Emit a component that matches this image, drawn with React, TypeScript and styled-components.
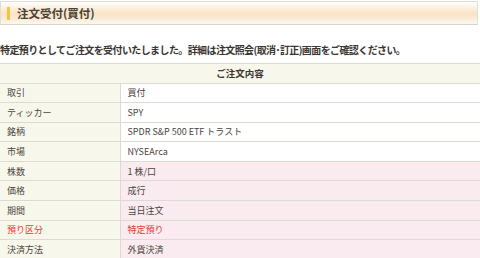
import React from 'react';
import styled, { createGlobalStyle } from 'styled-components';

// --- Global ---
const GlobalStyle = createGlobalStyle`
  html, body {
    margin: 0;
    padding: 0;
    background: #ffffff;
  }
  body {
    font-family: "Noto Sans CJK JP", "Noto Sans", sans-serif;
    color: #3b3b3b;
  }
`;

// --- Types ---
interface OrderRow {
  label: string;
  value: string;
  tone?: 'plain' | 'pink';
  alert?: boolean;
}

const rows: OrderRow[] = [
  { label: '取引', value: '買付' },
  { label: 'ティッカー', value: 'SPY' },
  { label: '銘柄', value: 'SPDR S&P 500 ETF トラスト' },
  { label: '市場', value: 'NYSEArca' },
  { label: '株数', value: '1 株/口', tone: 'pink' },
  { label: '価格', value: '成行', tone: 'pink' },
  { label: '期間', value: '当日注文', tone: 'pink' },
  { label: '預り区分', value: '特定預り', tone: 'pink', alert: true },
  { label: '決済方法', value: '外貨決済', tone: 'pink' },
];

// --- Styled Components ---
const Page = styled.div`
  width: 480px;
  padding-top: 1px;
`;

const TitleBar = styled.div`
  display: flex;
  align-items: center;
  gap: 7px;
  width: 478px;
  height: 24px;
  padding-left: 6px;
  box-sizing: border-box;
  border: 1px solid #e2ddd5;
  border-bottom-color: #d6d2cc;
  background: linear-gradient(
    to bottom,
    #ffffff 0%,
    #fbeedd 30%,
    #f8e3c6 55%,
    #fbefe0 85%,
    #fdf7ef 100%
  );
`;

const TitleMark = styled.span`
  width: 3px;
  height: 13px;
  background: #f2c53d;
`;

const TitleText = styled.h1`
  margin: 0;
  font-size: 11.5px;
  font-weight: 700;
  color: #4a4236;
`;

const Message = styled.p`
  margin: 16px 0 0;
  height: 22px;
  line-height: 18px;
  font-size: 10px;
  font-weight: 700;
  color: #3a3530;
  letter-spacing: -0.6px;
  white-space: nowrap;
`;

const Table = styled.table`
  width: 480px;
  border-collapse: collapse;
  table-layout: fixed;
  font-size: 9px;
`;

const HeadCell = styled.th`
  height: 19.5px;
  padding: 0;
  box-sizing: border-box;
  background: #f8f7ec;
  border-top: 1px solid #dcdad3;
  border-bottom: 1px solid #dcdad3;
  font-size: 9.5px;
  font-weight: 700;
  color: #3a3530;
  text-align: center;
`;

const LabelCell = styled.td<{ $alert?: boolean }>`
  width: 120px;
  height: 19.6px;
  padding: 0 0 0 7px;
  box-sizing: border-box;
  background: #f8f7ec;
  border-bottom: 1px solid #dcdad3;
  border-right: 1px solid #dcdad3;
  color: ${(p) => (p.$alert ? '#e33a36' : '#4a4540')};
`;

const ValueCell = styled.td<{ $tone?: 'plain' | 'pink'; $alert?: boolean }>`
  height: 19.6px;
  padding: 0 0 0 7px;
  box-sizing: border-box;
  background: ${(p) => (p.$tone === 'pink' ? '#f9ebef' : '#ffffff')};
  border-bottom: 1px solid #dcdad3;
  color: ${(p) => (p.$alert ? '#e33a36' : '#4a4540')};
`;

// --- Main Component ---
const App = () => (
  <Page>
    <GlobalStyle />
    <TitleBar>
      <TitleMark />
      <TitleText>注文受付(買付)</TitleText>
    </TitleBar>
    <Message>
      特定預りとしてご注文を受付いたしました。詳細は注文照会(取消･訂正)画面をご確認ください。
    </Message>
    <Table>
      <colgroup>
        <col style={{ width: 120 }} />
        <col />
      </colgroup>
      <thead>
        <tr>
          <HeadCell colSpan={2}>ご注文内容</HeadCell>
        </tr>
      </thead>
      <tbody>
        {rows.map((row) => (
          <tr key={row.label}>
            <LabelCell $alert={row.alert}>{row.label}</LabelCell>
            <ValueCell $tone={row.tone} $alert={row.alert}>
              {row.value}
            </ValueCell>
          </tr>
        ))}
      </tbody>
    </Table>
  </Page>
);

export default App;
